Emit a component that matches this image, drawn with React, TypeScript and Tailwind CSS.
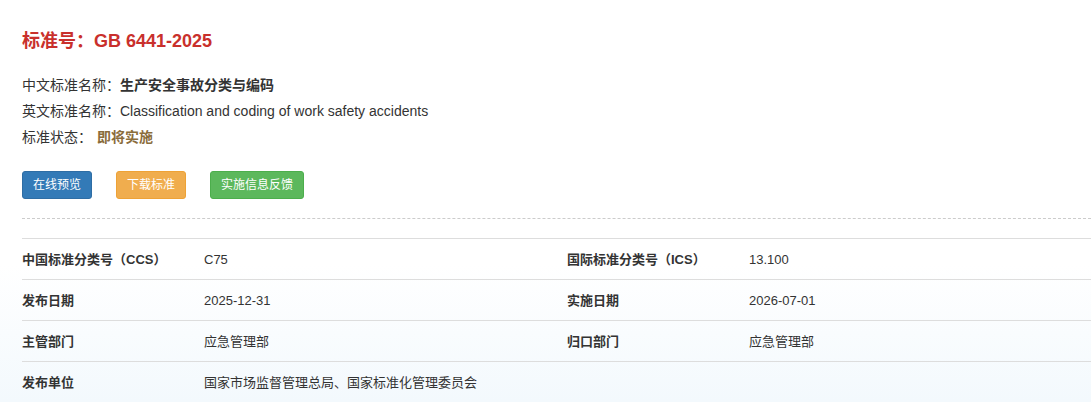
const font = "font-['Liberation_Sans','Noto_Sans_CJK_SC',sans-serif]";

const rows: [string, string, string, string][] = [
  ["中国标准分类号（CCS）", "C75", "国际标准分类号（ICS）", "13.100"],
  ["发布日期", "2025-12-31", "实施日期", "2026-07-01"],
  ["主管部门", "应急管理部", "归口部门", "应急管理部"],
  ["发布单位", "国家市场监督管理总局、国家标准化管理委员会", "", ""],
];

export default function App() {
  return (
    <div
      className={`${font} min-h-screen h-[402px] overflow-hidden bg-[linear-gradient(to_bottom,#ffffff_66%,#f3f9fd_100%)] pl-[22px] pt-[29px] text-[#333]`}
    >
      {/* 标题 */}
      <h1 className="text-[18px] font-bold leading-[24px] text-[#c9302c]">
        标准号：GB 6441-2025
      </h1>

      {/* 基本信息 */}
      <div className="mt-[19px] text-[14px] leading-[26px]">
        <p>
          中文标准名称：<span className="font-bold">生产安全事故分类与编码</span>
        </p>
        <p>英文标准名称：Classification and coding of work safety accidents</p>
        <p>
          标准状态：<span className="ml-[5px] font-bold text-[#8a6d3b]">即将实施</span>
        </p>
      </div>

      {/* 按钮 */}
      <div className="mt-[21px] flex gap-[24px] text-[12px] text-white">
        <button className="h-[28px] rounded-[3px] border border-[#2e6da4] bg-[#337ab7] px-[10px]">
          在线预览
        </button>
        <button className="h-[28px] rounded-[3px] border border-[#eea236] bg-[#f0ad4e] px-[10px]">
          下载标准
        </button>
        <button className="h-[28px] rounded-[3px] border border-[#4cae4c] bg-[#5cb85c] px-[10px]">
          实施信息反馈
        </button>
      </div>

      <div className="mt-[19px] border-t border-dashed border-[#ccc]" />

      {/* 详细信息表 */}
      <div className="mt-[19px] text-[13px]">
        {rows.map((r, i) => (
          <div
            key={i}
            className="grid h-[41px] grid-cols-[182px_363px_182px_1fr] items-center border-t border-[#ddd] pt-[1px]"
          >
            <div className="font-bold">{r[0]}</div>
            <div>{r[1]}</div>
            <div className="font-bold">{r[2]}</div>
            <div>{r[3]}</div>
          </div>
        ))}
      </div>
    </div>
  );
}
